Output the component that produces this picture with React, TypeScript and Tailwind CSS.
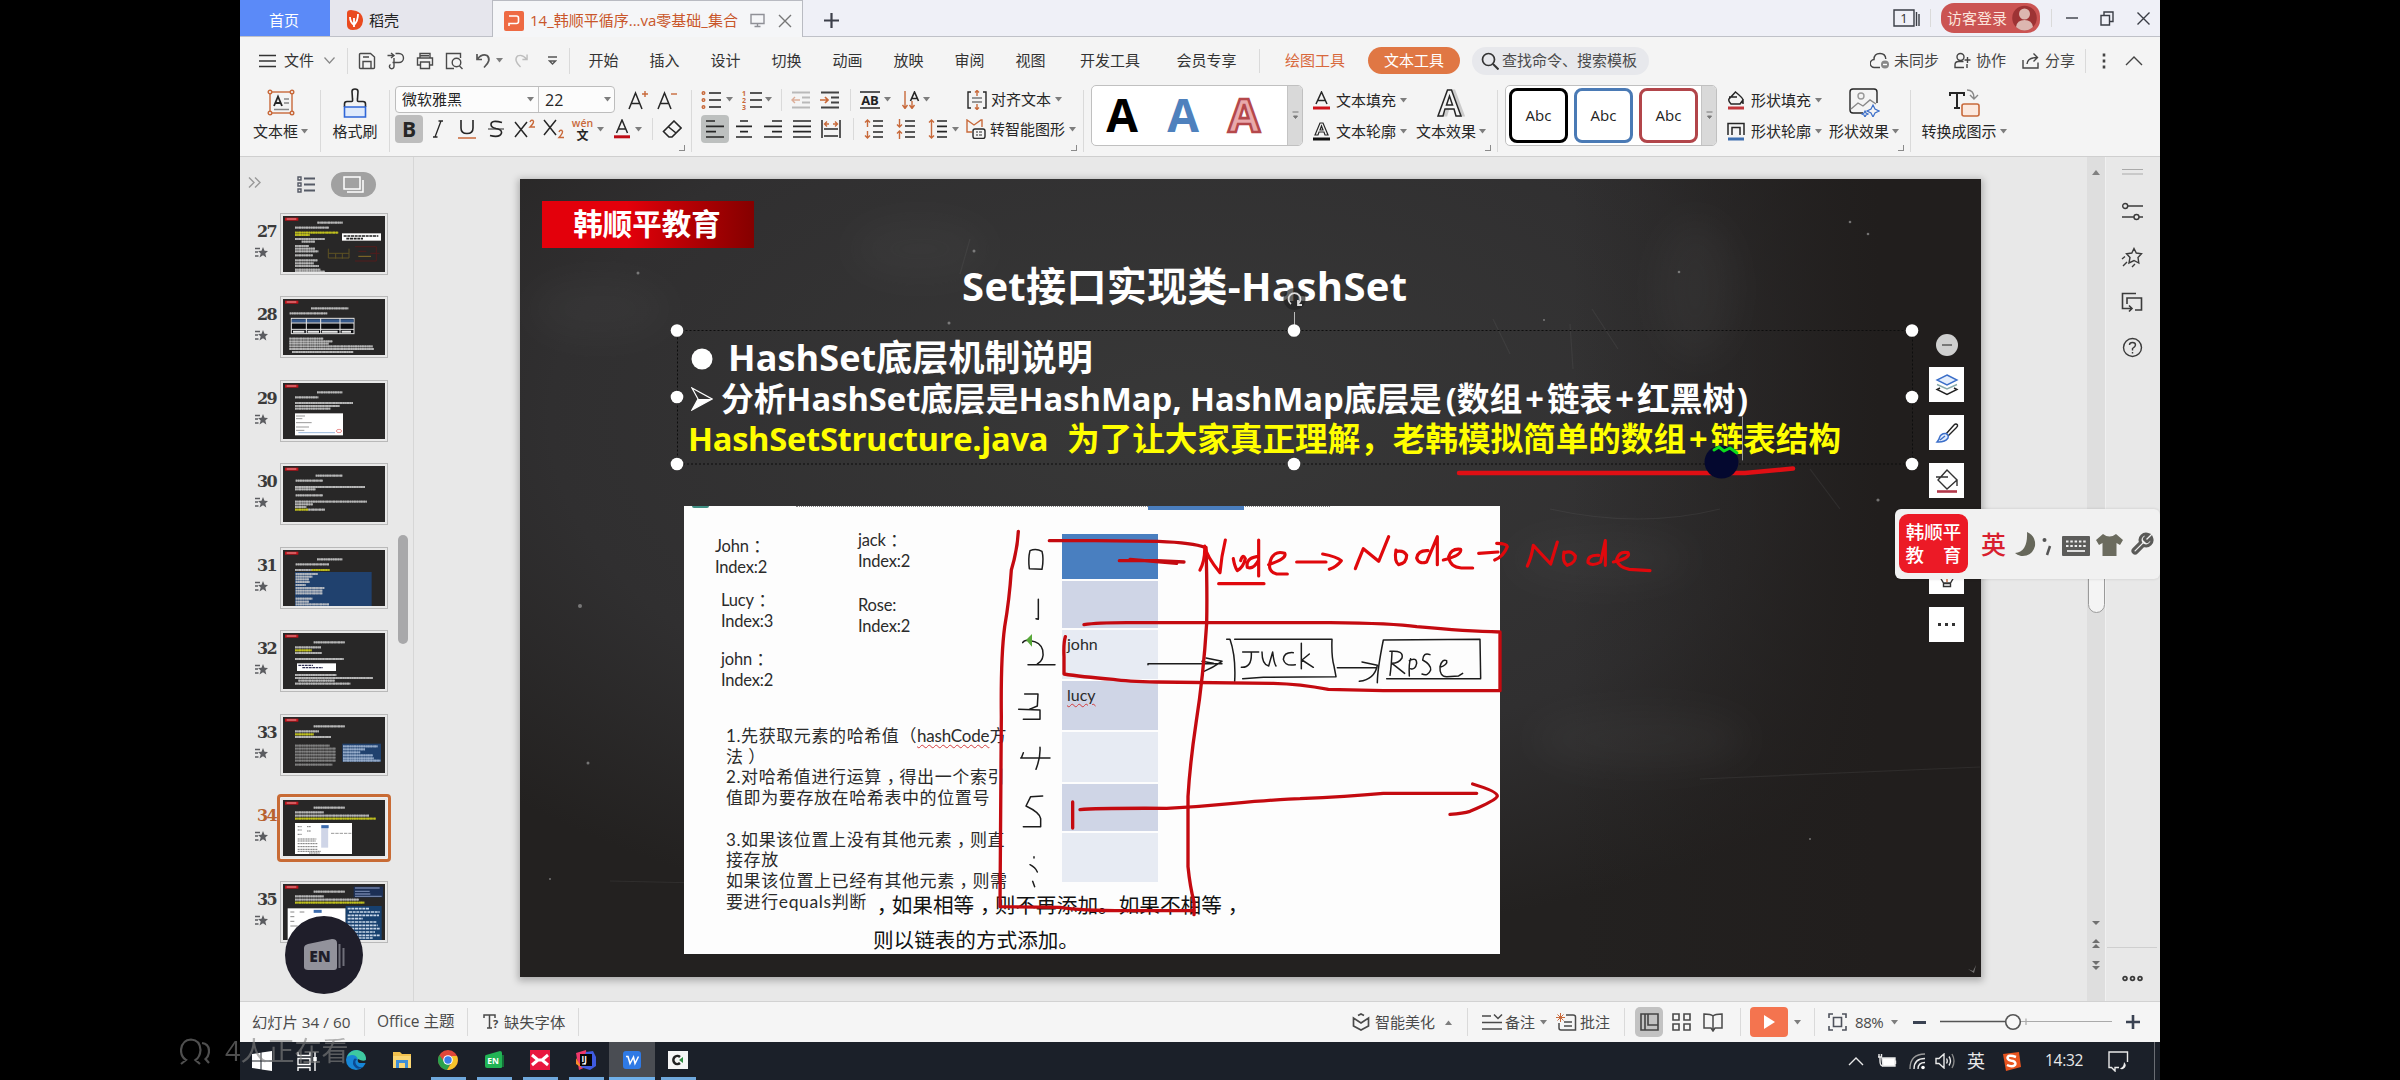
import React from 'react';

type SvgProps = { w?: number; h?: number; vb?: string; className?: string; children: React.ReactNode };

const Ic = ({ w = 18, h = 18, vb = '0 0 18 18', className = '', children }: SvgProps) => (
  <svg width={w} height={h} viewBox={vb} fill="none" stroke="currentColor" strokeWidth={1.4} className={'shrink-0 ' + className}>
    {children}
  </svg>
);

const Caret = ({ className = '' }: { className?: string }) => (
  <svg width="7" height="5" viewBox="0 0 7 5" className={'shrink-0 ' + className}>
    <path d="M0 0h7L3.5 4.5z" fill="#7d7d7d" />
  </svg>
);

const Sep = ({ className = '' }: { className?: string }) => <div className={'w-px shrink-0 bg-[#dadada] ' + className} />;

const OR = '#c8693a';

/* ---------- title bar ---------- */

const TitleBar = () => (
  <div className="flex h-[37px] items-stretch border-b border-[#bfc1c8] bg-[#eff0f7] text-[15px]">
    <div className="flex w-[90px] items-center justify-center bg-[#5b8af8] pr-[2px] pt-1 text-white">首页</div>
    <div className="flex w-[162px] items-center gap-[6px] bg-[#e6e6ed] pl-[16px] pt-1 text-[#222]">
      <svg width="17" height="20" viewBox="0 0 17 20">
        <path d="M1 3Q1 0 5 0Q17 1 17 11Q16 20 7 20Q1 20 1 15z" fill="#ea4a1f" />
        <path d="M8 17V8M8 15Q4 12 4 7M8 15Q12 11 12 4" stroke="#fff" strokeWidth="1.8" fill="none" />
      </svg>
      稻壳
    </div>
    <div className="-mb-px flex w-[311px] items-center border-x border-t border-[#b9bbc2] bg-[#f5f6f8] pl-[11px] pt-[3px] text-[#c9562a]">
      <svg width="20" height="20" viewBox="0 0 20 20" className="shrink-0">
        <rect width="20" height="20" rx="2" fill="#ee6a43" />
        <path d="M5 15V12.500H12.500A2 2 0 0 0 14.500 10.500V7A2 2 0 0 0 12.500 5H5" fill="none" stroke="#fff" strokeWidth="1.6" />
      </svg>
      <span className="ml-[6px] w-[209px] whitespace-nowrap">14_韩顺平循序...va零基础_集合</span>
      <Ic w={15} h={15} vb="0 0 15 15" className="ml-[11px] text-[#8f9096]"><path d="M1 1.500H14V10.500H1zM7.500 11V13M4.500 13.500H10.500" /></Ic>
      <Ic w={14} h={14} vb="0 0 14 14" className="ml-[13px] text-[#777]"><path d="M1 1L13 13M13 1L1 13" /></Ic>
    </div>
    <div className="ml-[21px] flex items-center pt-1 text-[#3c3f4a]">
      <Ic w={15} h={15} vb="0 0 15 15"><path d="M7.500 0V15M0 7.500H15" strokeWidth="2.200" /></Ic>
    </div>
    <div className="ml-auto mr-[10px] flex items-center text-[#3a3d45]">
      <Ic w={27} h={18} vb="0 0 27 18"><path d="M1 1H21V17H1zM23.500 3V17M26 5V17" /><text x="11" y="14" textAnchor="middle" fontSize="13" fill="#333" stroke="none">1</text></Ic>
      <Sep className="ml-[10px] h-[18px]" />
      <div className="ml-[10px] flex h-[30px] w-[99px] items-center rounded-[13px] bg-[#cb5453] pl-[6px] text-[#fbe4dc]">
        <span className="whitespace-nowrap">访客登录</span>
        <svg width="25" height="26" viewBox="0 0 25 26" className="ml-[5px] shrink-0">
          <circle cx="12.500" cy="13" r="12.300" fill="#9d3334" />
          <circle cx="12.500" cy="9" r="5.500" fill="#dcb6b0" />
          <path d="M4 22Q5 15 12.500 15Q20 15 21 22Q17 25.500 12.500 25.500Q8 25.500 4 22z" fill="#dcb6b0" />
        </svg>
      </div>
      <Sep className="ml-[11px] h-[18px]" />
      <Ic w={12} h={12} vb="0 0 12 12" className="ml-[14px]"><path d="M0 6H12" /></Ic>
      <Ic w={14} h={15} vb="0 0 14 15" className="ml-[22px]"><path d="M1 4.500H9.500V14H1zM4 4V1H13V10.500H10" /></Ic>
      <Ic w={13} h={13} vb="0 0 13 13" className="ml-[23px]"><path d="M0.500 0.500L12.500 12.500M12.500 0.500L0.500 12.500" /></Ic>
    </div>
  </div>
);

/* ---------- menu row ---------- */

const MenuRow = () => (
  <div className="flex h-[49px] items-center pb-[2px] text-[15px] text-[#333]">
    <Ic w={17} h={14} vb="0 0 17 14" className="ml-[19px]"><path d="M0 1.500H17M0 7H17M0 12.500H17" /></Ic>
    <span className="ml-[8px] w-[30px]">文件</span>
    <Ic w={11} h={7} vb="0 0 11 7" className="ml-[10px] text-[#888]"><path d="M0.500 0.500L5.500 6L10.500 0.500" strokeWidth="1.200" /></Ic>
    <Sep className="ml-[12px] h-[26px]" />
    <div className="ml-[10px] flex items-center gap-[11px] text-[#4a4a4a]">
      <Ic><path d="M2.500 1.500H12.500L16.500 5V15.500Q16.500 16.500 15.500 16.500H2.500Q1.500 16.500 1.500 15.500V2.500Q1.500 1.500 2.500 1.500zM5 16V9.500H13V16M5 5H11" /></Ic>
      <Ic><path d="M0.500 3.500H6M4 1L7 3.500L4 6M8.500 1.500H12A4.300 4.300 0 0 1 12 10.500H5.500M7 10.500V6M7 10.500V14.500A2.300 2.300 0 1 1 3.500 12.500" /></Ic>
      <Ic><path d="M4 6V1.500H14V6M4 13H1.500V6H16.500V13H14M4.500 10H13.500V16.500H4.500zM4.500 3.800H13" /></Ic>
      <Ic w={19} vb="0 0 19 18"><path d="M9 16.500H1.500V1.500H15.500V6M17.500 17L14.500 14" /><circle cx="11.500" cy="10.500" r="4.300" /></Ic>
    </div>
    <Ic w={15} h={17} vb="0 0 15 17" className="ml-[12px] text-[#555]"><path d="M1 2V7.500H6M1.500 7Q6 1.500 11 3.500Q16 8 8 15.500" strokeWidth="1.700" /></Ic>
    <Caret className="ml-[5px]" />
    <Ic w={14} h={17} vb="0 0 15 17" className="ml-[11px] text-[#bdbdbd]"><path d="M14 2V7.500H9M13.500 7Q9 1.500 4 3.500Q-1 8 7 15.500" strokeWidth="1.500" /></Ic>
    <Ic w={9} h={10} vb="0 0 9 10" className="ml-[20px] text-[#555]"><path d="M0 1H9M1.500 5L4.500 8L7.500 5z" /></Ic>
    <Sep className="ml-[12px] mr-[3px] h-[26px]" />
    {['开始', '插入', '设计', '切换', '动画', '放映', '审阅', '视图'].map((t) => (
      <span key={t} className="w-[61px] text-center">{t}</span>
    ))}
    <span className="w-[98px] text-center">开发工具</span>
    <span className="w-[95px] text-center">会员专享</span>
    <Sep className="ml-[5px] h-[24px]" />
    <span className="ml-[25px] w-[60px] text-[#d8683c]">绘图工具</span>
    <span className="ml-[23px] flex h-[27px] w-[92px] items-center justify-center rounded-full bg-[#e07744] text-white">文本工具</span>
    <div className="ml-[12px] flex h-[28px] w-[177px] items-center rounded-full bg-[#e7e8ec] pl-[9px]">
      <Ic className="text-[#333]"><circle cx="7.500" cy="7.500" r="6" strokeWidth="1.700" /><path d="M12 12L17.500 17.500" strokeWidth="2" /></Ic>
      <span className="ml-[3px] whitespace-nowrap text-[#4b4b4b]">查找命令、搜索模板</span>
    </div>
    <div className="ml-auto mr-[17px] flex items-center text-[#444]">
      <Ic w={20} h={17} vb="0 0 20 17"><path d="M10 15.500H4.500A4 4 0 0 1 4 7.500Q4 1.500 10 1.500Q15.500 1.500 15.800 7" /><circle cx="15" cy="12.500" r="4" fill="#888" stroke="none" /><path d="M13 12.500H17" stroke="#fff" /></Ic>
      <span className="ml-[4px] w-[45px]">未同步</span>
      <Ic w={19} className="ml-[14px]"><circle cx="7" cy="5" r="3.500" /><path d="M10 9.500H5Q1.500 9.500 1.500 13V15.500H10.500M14 5V11M11 8H17M13.500 12V16" /></Ic>
      <span className="ml-[4px] w-[30px]">协作</span>
      <Ic w={19} className="ml-[15px]"><path d="M1.500 8V16H16.500V10.500M5.500 12Q6 5.500 15.500 5.500M12 1.500L16 5.500L12 9.500" /></Ic>
      <span className="ml-[5px] w-[30px]">分享</span>
      <Sep className="ml-[10px] h-[24px]" />
      <Ic w={4} h={16} vb="0 0 4 16" className="ml-[16px]"><path d="M2 0.500V3.500M2 6.500V9.500M2 12.500V15.500" strokeWidth="2.600" /></Ic>
      <Ic w={18} h={10} vb="0 0 18 10" className="ml-[19px]"><path d="M1 9L9 1L17 9" /></Ic>
    </div>
  </div>
);

/* ---------- ribbon ---------- */

const Big = ({ icon, label, caret = true, className = '' }: { icon: React.ReactNode; label: string; caret?: boolean; className?: string }) => (
  <div className={'flex shrink-0 flex-col items-center ' + className}>
    <div className="flex h-[33px] items-center">{icon}</div>
    <div className="flex h-[24px] items-center gap-[3px] whitespace-nowrap">
      {label}
      {caret && <Caret />}
    </div>
  </div>
);

const Corner = () => (
  <div className="absolute bottom-[5px] right-[6px] h-[6px] w-[6px] border-b border-r border-[#8a8a8a]" />
);

const Slot = ({ children }: { children: React.ReactNode }) => <div className="flex w-[29px] shrink-0 items-center justify-center">{children}</div>;

const Tool = ({ icon, label, className = '' }: { icon: React.ReactNode; label: string; className?: string }) => (
  <div className={'flex items-center ' + className}>
    {icon}
    <span className="ml-[6px] whitespace-nowrap">{label}</span>
    <Caret className="ml-[4px]" />
  </div>
);

const GalleryButton = () => (
  <div className="ml-auto flex w-[15px] items-center justify-center rounded-r-[4px] border-l border-[#c4c4c4] bg-[#d9d9d9]">
    <Ic w={7} h={9} vb="0 0 7 9" className="text-[#777]"><path d="M0.500 1H6.500M1.500 5H5.500L3.500 7.500z" fill="#777" strokeWidth="1" /></Ic>
  </div>
);

const Lines = ({ d }: { d: string }) => <Ic w={18} h={18}><path d={d} strokeWidth="1.700" /></Ic>;

const Ribbon = () => (
  <div className="flex h-[71px] items-start border-b border-[#cfcfcf] text-[15px] text-[#262626]">
    <Big
      className="w-[80px] pl-px"
      label="文本框"
      icon={
        <Ic w={28} h={27} vb="0 0 28 27">
          <rect x="3" y="3" width="22" height="21" stroke={OR} />
          <g fill="#f4f4f4" stroke={OR}><circle cx="3" cy="3" r="1.800" /><circle cx="25" cy="3" r="1.800" /><circle cx="3" cy="24" r="1.800" /><circle cx="25" cy="24" r="1.800" /></g>
          <path d="M7 17L11 7.500L15 17M8.500 14H13.500" strokeWidth="1.800" /><path d="M17 10H22M17 14H22M7 20.500H22" stroke="#888" />
        </Ic>
      }
    />
    <Sep className="mt-[4px] h-[62px]" />
    <Big
      className="w-[68px]"
      label="格式刷"
      caret={false}
      icon={
        <Ic w={24} h={30} vb="0 0 24 30">
          <path d="M1.500 19V16Q1.500 13.500 4 13.500H8.500Q10 13.500 9.500 11L9 3.500Q9 1 12 1Q15 1 15 3.500L14.500 11Q14 13.500 15.500 13.500H20Q22.500 13.500 22.500 16V19" strokeWidth="1.600" />
          <path d="M1.500 19H22.500V29H1.500z" stroke="#2f66d8" strokeWidth="1.600" fill="#dfeafb" />
        </Ic>
      }
    />
    <Sep className="mt-[4px] h-[62px]" />

    <div className="relative flex h-full w-[301px] shrink-0 flex-col">
      <div className="flex h-[27px] items-center">
        <div className="ml-[5px] flex h-[27px] w-[220px] items-stretch rounded-[4px] border border-[#bdbdbd] bg-[#fcfcfc]">
          <div className="flex w-[143px] items-center justify-between border-r border-[#c4c4c4] pl-[6px] pr-[4px]">微软雅黑<Caret /></div>
          <div className="flex flex-1 items-center justify-between pl-[6px] pr-[3px] text-[16px]">22<Caret /></div>
        </div>
        <Ic w={20} h={20} vb="0 0 20 20" className="ml-[13px]"><path d="M1 19L7.500 3L14 19M3.500 13.500H11.500" strokeWidth="1.500" /><path d="M17 1V7M14 4H20" stroke={OR} /></Ic>
        <Ic w={20} h={20} vb="0 0 20 20" className="ml-[9px]"><path d="M1 19L7.500 3L14 19M3.500 13.500H11.500" strokeWidth="1.500" /><path d="M14 4H20" stroke={OR} /></Ic>
      </div>
      <div className="mt-[2px] flex h-[28px] items-center">
        <div className="ml-[5px] flex h-[28px] w-[28px] shrink-0 items-center justify-center rounded-[4px] bg-[#bdbdbd] text-[21px] font-bold leading-none">B</div>
        <Slot><Ic><path d="M12 1L6 17M9.500 1H14M4 17H8.500" strokeWidth="1.300" /></Ic></Slot>
        <Slot><Ic w={20} h={20} vb="0 0 20 20"><path d="M4 1V9Q4 14.500 10 14.500Q16 14.500 16 9V1" strokeWidth="1.600" /><path d="M1 19H19" stroke={OR} strokeWidth="1.500" /></Ic></Slot>
        <Slot><Ic><path d="M15 2.500Q4 -0.500 4 4.500Q4 7.500 9 8.500Q15 9.500 14.500 13Q13 18 3 15.500" strokeWidth="1.600" /><path d="M1 9H17" strokeWidth="1" /></Ic></Slot>
        <Slot><Ic w={22} h={20} vb="0 0 22 20"><path d="M1 3L13 18M13 3L1 18" strokeWidth="1.500" /><path d="M16 3Q17 0.500 19 1.500Q21 3 16 8H21" stroke={OR} /></Ic></Slot>
        <Slot><Ic w={22} h={20} vb="0 0 22 20"><path d="M1 1L13 16M13 1L1 16" strokeWidth="1.500" /><path d="M16 13Q17 10.500 19 11.500Q21 13 16 18.500H21" stroke={OR} /></Ic></Slot>
        <Slot>
          <div className="flex flex-col items-center leading-none"><span className="text-[10.500px] font-semibold leading-[12px] text-[#c8693a]">wén</span><span className="text-[12px] font-bold leading-[13px]">文</span></div>
        </Slot>
        <Caret />
        <Ic w={20} h={20} vb="0 0 20 20" className="ml-[8px]"><path d="M4.500 14L10 1L15.500 14M6.500 10H13.500" strokeWidth="1.500" /><path d="M2 17.800H18" stroke="#c00d17" strokeWidth="3" /></Ic>
        <Caret className="ml-[3px]" />
        <Sep className="ml-[10px] h-[22px]" />
        <Ic w={20} h={18} vb="0 0 20 18" className="ml-[9px]"><path d="M12 1L19 8L10 17H7L1.500 11.500zM6 6.500L14 13" strokeWidth="1.600" /></Ic>
      </div>
      <Corner />
    </div>
    <Sep className="mt-[4px] h-[62px]" />

    <div className="relative flex h-full w-[391px] shrink-0 flex-col">
      <div className="flex h-[27px] items-center">
        <Ic w={20} h={20} vb="0 0 20 20" className="ml-[9px]"><path d="M8 3H20M8 10H20M8 17H20" strokeWidth="1.800" stroke="#555" /><g stroke={OR}><circle cx="2.500" cy="3" r="1.300" /><circle cx="2.500" cy="10" r="1.300" /><circle cx="2.500" cy="17" r="1.300" /></g></Ic>
        <Caret className="ml-[5px]" />
        <Ic w={20} h={26} vb="0 0 20 26" className="ml-[9px]"><path d="M8 6H20M8 13H20M8 20H20" strokeWidth="1.800" stroke="#555" /><g fill={OR} stroke="none" fontSize="7" fontWeight="bold"><text x="0" y="8.500">1</text><text x="0" y="15.500">2</text><text x="0" y="22.500">3</text></g></Ic>
        <Caret className="ml-[3px]" />
        <Sep className="ml-[9px] h-[22px]" />
        <Ic w={20} className="ml-[9px] text-[#b9b9b9]" vb="0 0 20 18"><path d="M1 1.500H19M11 6.500H19M11 11.500H19M1 16.500H19" strokeWidth="1.800" /><path d="M9 9H1M4 6L1 9L4 12" stroke="#dcae99" /></Ic>
        <Ic w={20} className="ml-[9px] text-[#444]" vb="0 0 20 18"><path d="M1 1.500H19M11 6.500H19M11 11.500H19M1 16.500H19" strokeWidth="1.800" /><path d="M0 9H8M5 6L8 9L5 12" stroke={OR} strokeWidth="1.700" /></Ic>
        <Sep className="ml-[10px] h-[22px]" />
        <Ic w={20} className="ml-[9px]" vb="0 0 20 18"><path d="M0 1H20M0 17H20" strokeWidth="1.700" /><text x="10" y="13.800" textAnchor="middle" fontSize="13" fontWeight="bold" fill="#222" stroke="none">AB</text></Ic>
        <Caret className="ml-[4px]" />
        <Ic w={18} className="ml-[11px]" vb="0 0 18 18"><path d="M3 0V17M0.500 14L3 17.500L5.500 14M10 10V17M7.500 14L10 17.500L12.500 14" stroke={OR} /><path d="M8.500 10L12.500 1L16.500 10M10 7.500H15" strokeWidth="1.600" /></Ic>
        <Caret className="ml-[3px]" />
        <Ic w={20} h={20} vb="0 0 20 20" className="ml-[37px]"><path d="M4 2H1V18H4M16 2H19V18H16" /><path d="M5 8H15M5 12H15" stroke="#777" /><path d="M10 6V0.500M8 2.500L10 0.500L12 2.500M10 14V19.500M8 17.500L10 19.500L12 17.500" stroke={OR} /></Ic>
        <span className="ml-[4px] whitespace-nowrap">对齐文本</span>
        <Caret className="ml-[4px]" />
      </div>
      <div className="mt-[2px] flex h-[28px] items-center">
        <div className="ml-[9px] flex h-[28px] w-[28px] shrink-0 items-center justify-center rounded-[4px] bg-[#bdc0bf]"><Lines d="M0 1H9M0 6.300H18M0 11.600H10M0 17H18" /></div>
        <Slot><Lines d="M5 1H13M1 6.300H17M5 11.600H13M1 17H17" /></Slot>
        <Slot><Lines d="M8 1H18M0 6.300H18M8 11.600H18M0 17H18" /></Slot>
        <Slot><Lines d="M0 1H18M0 6.300H18M0 11.600H18M0 17H18" /></Slot>
        <Slot><Ic w={20} vb="0 0 20 18"><path d="M1 0V18M19 0V18M3 9H17M3 16H17" strokeWidth="1.500" /><path d="M8 4H3.500M6 1.500L3.500 4L6 6.500M12 4H16.500M14 1.500L16.500 4L14 6.500" stroke={OR} /></Ic></Slot>
        <Sep className="ml-[8px] h-[22px]" />
        <Ic w={20} h={20} vb="0 0 20 20" className="ml-[10px]"><path d="M9 2H19M9 7H19M9 13H19M9 18H19" strokeWidth="1.700" /><path d="M3.500 8V1M1 3.500L3.500 1L6 3.500M3.500 12V19M1 16.500L3.500 19L6 16.500" stroke={OR} /></Ic>
        <Ic w={20} h={20} vb="0 0 20 20" className="ml-[12px]"><path d="M9 2H19M9 7H19M9 13H19M9 18H19" strokeWidth="1.700" /><path d="M3.500 0V8M1 5.500L3.500 8L6 5.500M3.500 20V12M1 14.500L3.500 12L6 14.500" stroke={OR} /></Ic>
        <Ic w={20} h={20} vb="0 0 20 20" className="ml-[12px]"><path d="M9 2H19M9 7.300H19M9 12.600H19M9 18H19" strokeWidth="1.700" /><path d="M3.500 1V19M1 3.500L3.500 1L6 3.500M1 16.500L3.500 19L6 16.500" stroke={OR} /></Ic>
        <Caret className="ml-[4px]" />
        <Ic w={20} h={20} vb="0 0 20 20" className="ml-[7px]"><path d="M6 13H1V1L8 6L15 1H16V8" stroke={OR} /><rect x="7" y="10" width="12" height="9.500" rx="2" /><path d="M10 13H12M13 13H16M10 16H12M13 16H16" strokeWidth="1" /></Ic>
        <span className="ml-[4px] whitespace-nowrap">转智能图形</span>
        <Caret className="ml-[4px]" />
      </div>
      <Corner />
    </div>
    <Sep className="mt-[4px] h-[62px]" />

    <div className="relative flex h-full w-[413px] shrink-0">
      <div className="-mt-px ml-[7px] flex h-[61px] w-[212px] rounded-[5px] border border-[#c0c0c0] bg-white">
        {[
          ['black', 'black', 0],
          ['#4f81bd', '#4f81bd', 0],
          ['#e9a9ab', '#b5484b', 2.6],
        ].map(([fill, stroke, sw], i) => (
          <svg key={i} width="61" height="59" viewBox="0 0 61 59" className="shrink-0">
            <text x="30" y="46" textAnchor="middle" fontSize="46" fontWeight="bold" fill={fill as string} stroke={stroke as string} strokeWidth={sw as number}>A</text>
          </svg>
        ))}
        <GalleryButton />
      </div>
      <div className="ml-[10px] flex w-[93px] flex-col">
        <Tool className="h-[28px]" label="文本填充" icon={<Ic w={17} h={19} vb="0 0 17 19"><path d="M3 13L8.500 1L14 13M5 9.500H12" strokeWidth="1.500" /><path d="M0 17H17" stroke="#d0131b" strokeWidth="3" /></Ic>} />
        <Tool className="mt-[3px] h-[28px]" label="文本轮廓" icon={<Ic w={17} h={19} vb="0 0 17 19"><path d="M2 13L7 1H10L15 13H12L11 10H6L5 13zM7 8H10L8.500 4z" strokeWidth="1.200" /><path d="M0 17H17" stroke="#111" strokeWidth="3" /></Ic>} />
      </div>
      <Big className="ml-[10px] w-[70px]" label="文本效果" icon={<Ic w={30} h={30} vb="0 0 30 30"><path d="M5 27L14 3H18L27 27H22L20 20H12L10 27z" stroke="#ccc" strokeWidth="3" /><path d="M2 28L11.500 2H15.500L25 28H20L18 21H9L7 28zM10.500 17H16.500L13.500 8z" strokeWidth="1.500" fill="#f4f4f4" /></Ic>} />
      <Corner />
    </div>
    <Sep className="mt-[4px] h-[62px]" />

    <div className="relative flex h-full w-[412px] shrink-0">
      <div className="-mt-px ml-[7px] flex h-[61px] w-[212px] rounded-[5px] border border-[#c0c0c0] bg-white">
        <div className="flex items-center gap-[6px] pl-[3px] text-[#222]">
          <div className="flex h-[55px] w-[59px] items-center justify-center rounded-[8px] border-[3px] border-black text-[15px]">Abc</div>
          <div className="flex h-[55px] w-[59px] items-center justify-center rounded-[8px] border-[3px] border-[#4a7ab5] text-[15px]">Abc</div>
          <div className="flex h-[55px] w-[59px] items-center justify-center rounded-[8px] border-[3px] border-[#b2454a] text-[15px]">Abc</div>
        </div>
        <GalleryButton />
      </div>
      <div className="ml-[10px] flex w-[93px] flex-col">
        <Tool className="h-[28px]" label="形状填充" icon={<Ic w={18} h={19} vb="0 0 18 19"><path d="M8.500 1L2 8Q1 10 4 13H13L16 9Q16 7 8.500 1zM2 6H10M16 8V13" strokeWidth="1.500" /><path d="M1 17H17" stroke="#c2373c" strokeWidth="3" /></Ic>} />
        <Tool className="mt-[3px] h-[28px]" label="形状轮廓" icon={<Ic w={18} h={19} vb="0 0 18 19"><path d="M1 13V1.500H17V13M5 13V5.500H13V13" strokeWidth="1.500" /><path d="M1 17H17" stroke="#3e6fb0" strokeWidth="3" /></Ic>} />
      </div>
      <Big className="ml-[9px] w-[70px]" label="形状效果" icon={<Ic w={31} h={29} vb="0 0 31 29"><path d="M14 25H4Q1 25 1 22V4Q1 1 4 1H25Q28 1 28 4V15" /><circle cx="12" cy="8" r="3" stroke="#999" /><path d="M2 21L9 15L14 18L21 12L27 16" stroke="#888" /><path d="M24 17L26 21L30 23L26 25L24 29L22 25L18 23L22 21zM16 23L17 25L19 26L17 27L16 29L15 27L13 26L15 25z" stroke="#3c6fc9" strokeWidth="1.200" /></Ic>} />
      <Corner />
    </div>
    <Sep className="mt-[4px] h-[62px]" />
    <Big className="ml-[10px] w-[86px]" label="转换成图示" icon={<Ic w={31} h={28} vb="0 0 31 28"><path d="M1 7V4H15V7M8 4V19M5 19H11" strokeWidth="2" /><path d="M18 1Q25 1 25 9M21 6L25 10L29 6" stroke="#888" /><rect x="13" y="15" width="17" height="12" rx="2" stroke={OR} fill="#fbe9df" strokeWidth="1.600" /></Ic>} />
  </div>
);

/* ---------- slide navigator ---------- */

type Row = [number, number, number, string?];
const Y = '#dcdc1c';

const Thumb = ({ rows, under, over }: { rows: Row[]; under?: React.ReactNode; over?: React.ReactNode }) => (
  <svg width="102" height="56" viewBox="0 0 306 168" preserveAspectRatio="none" className="block bg-[#2a2828]">
    <rect width="306" height="168" fill="#282727" />
    {under}
    <rect x="6" y="5" width="40" height="9" fill="#c1121a" />
    <path d="M11 9H40" stroke="#e8a0a0" strokeWidth="3" />
    {rows.map(([x, y, w, c], i) => (
      <g key={i} stroke={c || '#cfcfcf'}>
        <path d={`M${x} ${y}h${w}`} strokeWidth="5.500" opacity="0.65" />
        <path d={`M${x} ${y}h${w}`} strokeWidth="6.500" strokeDasharray="5 2 3 1.500 7 2" opacity="0.6" />
      </g>
    ))}
    {over}
  </svg>
);

const thumbs: { n: number; body: React.ReactNode }[] = [
  { n: 27, body: <Thumb rows={[[103, 20, 76], [36, 35, 102], [36, 50, 130, Y], [36, 57, 44, Y], [36, 69, 90], [56, 77, 40], [36, 90, 42], [36, 98, 60], [36, 106, 70], [36, 118, 54], [36, 133, 68], [36, 142, 56], [36, 150, 72], [36, 161, 76], [36, 167, 90]]} over={<g fill="none" strokeWidth="3"><rect x="177" y="52" width="117" height="22" fill="#fff" /><path d="M182 60H286M190 68H240" stroke="#222" strokeWidth="5" strokeDasharray="9 2" /><path d="M136 98V126H198V98M136 112H198M158 112V128M178 112V128" stroke="#5e5224" /><path d="M216 92H280V135H216M226 106H250M262 112H290" stroke="#521c1c" /><path d="M226 121H264" stroke="#8a7228" /></g>} /> },
  { n: 28, body: <Thumb rows={[[84, 28, 112], [20, 43, 113], [19, 119, 102], [19, 127, 130], [19, 134, 118], [19, 142, 250], [19, 150, 254], [27, 159, 184]]} over={<g stroke="#e8e8e8" strokeWidth="3"><rect x="25" y="58" width="188" height="46" fill="#0c0d10" /><path d="M26 66H212" stroke="#35588a" strokeWidth="10" /><path d="M70 58V104M113 58V104M171 58V104M25 72H213M25 91H213" /><path d="M30 98H64M74 98H108M117 98H164M176 98H204" strokeWidth="6" /></g>} /> },
  { n: 29, body: <Thumb rows={[[102, 28, 76], [36, 43, 70], [36, 60, 174], [36, 69, 134], [36, 77, 106]]} over={<g><rect x="36" y="91" width="144" height="66" fill="#fff" /><path d="M39 99H66M39 107H58M39 119H86M39 132H78M39 142H64" stroke="#999" strokeWidth="3" /><path d="M46 149H156" stroke="#9ab8dc" strokeWidth="3" /><ellipse cx="168" cy="144" rx="8" ry="5" fill="none" stroke="#e06060" strokeWidth="2" /></g>} /> },
  { n: 30, body: <Thumb rows={[[98, 29, 80], [38, 44, 82], [36, 63, 210], [36, 70, 62], [38, 88, 82], [36, 107, 216], [36, 115, 54], [36, 123, 34], [36, 131, 40, Y], [76, 131, 50]]} /> },
  { n: 31, body: <Thumb rows={[[102, 28, 76], [38, 43, 100], [36, 60, 50], [86, 60, 54, Y], [38, 72, 66], [38, 80, 50], [38, 88, 40], [38, 96, 42], [38, 105, 30], [38, 114, 86], [38, 122, 80], [38, 130, 80], [38, 146, 50], [38, 155, 40], [38, 163, 100]]} under={<rect x="36" y="66" width="230" height="102" fill="#20416e" />} /> },
  { n: 32, body: <Thumb rows={[[92, 28, 94], [36, 43, 78], [36, 52, 50, Y], [36, 60, 80], [36, 78, 146], [36, 126, 124], [36, 135, 234], [46, 143, 110], [36, 152, 166]]} over={<g><rect x="42" y="91" width="117" height="23" fill="#fff" /><path d="M46 97H90M58 104H120" stroke="#335" strokeWidth="4" strokeDasharray="8 2" /></g>} /> },
  { n: 33, body: <Thumb rows={[[92, 28, 94], [36, 43, 72], [36, 52, 56, Y], [36, 60, 108], [36, 86, 104, '#909090'], [36, 95, 122, '#909090'], [36, 104, 122, '#909090'], [36, 113, 122, '#909090'], [36, 122, 122, '#909090'], [36, 131, 122, '#909090'], [36, 143, 112, '#909090'], [180, 88, 104, '#a9bdd8'], [180, 97, 66, '#a9bdd8'], [180, 106, 52, '#a9bdd8'], [180, 115, 90, '#a9bdd8'], [180, 124, 92, '#a9bdd8'], [180, 131, 112, '#a9bdd8']]} under={<rect x="178" y="80" width="116" height="54" fill="#20416e" />} /> },
  { n: 34, body: <Thumb rows={[[92, 23, 94], [36, 37, 86], [36, 47, 222], [36, 56, 242, Y]]} over={<g><rect x="36" y="69" width="171" height="93" fill="#fff" /><path d="M125 76V143" stroke="#cfd5e7" strokeWidth="21" /><path d="M115 80H137" stroke="#3d6cad" strokeWidth="9" /><path d="M44 80H56M72 80H84M44 90H56M72 93H84M44 103H56M44 117H100M44 123H98M44 131H104M44 140H104M44 148H104M44 154H114M78 159H110" stroke="#777" strokeWidth="3" strokeDasharray="4 1" /><path d="M144 100H205" stroke="#999" strokeWidth="3" strokeDasharray="10 3" /></g>} /> },
  { n: 35, body: <Thumb rows={[[92, 23, 94], [36, 37, 86], [36, 47, 192], [36, 56, 208, Y]]} over={<g><rect x="14" y="73" width="174" height="95" fill="#fff" /><path d="M92 82H116" stroke="#3d6cad" strokeWidth="9" /><path d="M22 84H34M50 84H64M22 98H34M22 112H34M22 126H44" stroke="#888" strokeWidth="3" /><rect x="212" y="8" width="88" height="32" fill="#1c2f55" /><path d="M216 12H290M216 22H260M216 30H262M216 37H296" stroke="#6d7fa5" strokeWidth="4" /><rect x="188" y="66" width="108" height="102" fill="#17406e" /><path d="M194 74H260M198 84H290M194 94H288M194 104H240M194 114H280M194 124H284M194 134H290M194 144H276M194 154H290M194 162H270" stroke="#c8d6e8" strokeWidth="5" strokeDasharray="9 2" /></g>} /> },
];

const Navigator = () => (
  <div className="flex w-[174px] shrink-0 flex-col overflow-hidden border-r border-[#d6d6d6]">
    <div className="mt-[14px] flex h-[26px] shrink-0 items-center">
      <Ic w={13} h={11} vb="0 0 13 11" className="mb-[4px] ml-[8px] text-[#999]"><path d="M1 0.500L6 5.500L1 10.500M7 0.500L12 5.500L7 10.500" /></Ic>
      <Ic w={18} h={17} vb="0 0 18 17" className="ml-[36px] text-[#555a66]"><path d="M7 2.500H18M7 8.500H18M7 14.500H18" strokeWidth="1.800" /><path d="M1 1H4V4H1zM1 7H4V10H1zM1 13H4V16H1z" /></Ic>
      <div className="ml-[16px] flex h-[25px] w-[45px] items-center justify-center rounded-full bg-[#a1a1a1] text-white">
        <Ic w={21} h={17} vb="0 0 21 17"><path d="M1 1H17V13H1zM4 16H20V4" strokeWidth="1.500" /></Ic>
      </div>
    </div>
    <div className="mt-[16px] flex">
      <div className="flex w-[149px] flex-col">
        {thumbs.map(({ n, body }) => (
          <div key={n} className="flex h-[83.45px] shrink-0 items-start">
            <div className="flex w-[40px] flex-col items-end pr-[4px] pt-[9px]">
              <span className={"text-[16px] font-bold leading-[20px] [font-family:'DejaVu_Serif',serif] [letter-spacing:-1.6px] " + (n === 34 ? 'text-[#b8622f]' : 'text-[#3b3b3b]')}>{n}</span>
              <Ic w={13} h={11} vb="0 0 13 11" className="mr-[8px] mt-[5px] text-[#5b5c60]"><path d="M0 1.500H5M0 5H3M0 9H3.500" strokeWidth="1.400" /><path d="M8 0L9.500 3.800L13 4L10.300 6.500L11.300 10.500L8 8.300L4.500 10.500L5.700 6.500L3 4L6.500 3.800z" fill="#5b5c60" stroke="none" /></Ic>
            </div>
            <div className={n === 34 ? 'h-[62px] w-[108px] rounded-[1px] border border-[#eee] p-[2px] outline-[3px] outline-[#c86b35] outline-solid' : 'h-[62px] w-[108px] border border-[#b9b9b9] p-[2px]'}>{body}</div>
          </div>
        ))}
      </div>
      <div className="ml-[9px] mt-[322px] h-[109px] w-[10px] shrink-0 rounded-full bg-[#a8a8aa]" />
    </div>
  </div>
);

/* ---------- slide ---------- */

const Board = () => (
  <svg viewBox="0 0 1461 798" className="absolute inset-0 h-full w-full">
    <defs>
      <radialGradient id="glow" cx="0.45" cy="0.3" r="0.66">
        <stop offset="0" stopColor="#383838" /><stop offset="0.65" stopColor="#302f30" /><stop offset="1" stopColor="#232120" />
      </radialGradient>
      <linearGradient id="side" x1="0" x2="1"><stop offset="0.72" stopColor="#211e1d" stopOpacity="0" /><stop offset="0.93" stopColor="#211e1d" /></linearGradient>
      <filter id="soft"><feGaussianBlur stdDeviation="18" /></filter>
    </defs>
    <rect width="1461" height="798" fill="url(#glow)" />
    <rect width="1461" height="798" fill="url(#side)" />
    <g filter="url(#soft)" fill="#555" opacity="0.16">
      <ellipse cx="1175" cy="110" rx="40" ry="70" /><ellipse cx="1080" cy="380" rx="90" ry="26" /><ellipse cx="1120" cy="560" rx="110" ry="30" />
      <ellipse cx="400" cy="70" rx="70" ry="30" /><ellipse cx="80" cy="130" rx="70" ry="30" />
    </g>
    <g stroke="#777" opacity="0.16" strokeWidth="1.200" fill="none">
      <path d="M440 95L450 60M1072 130L1098 170M90 702L180 704M1290 290L1320 330M1180 600L1460 588M1030 330Q1120 350 1200 330M973 140L990 175M1050 145L1053 190" />
    </g>
    <g fill="#aaa" opacity="0.6">
      <circle cx="454" cy="72" r="1.500" /><circle cx="429" cy="144" r="1.500" /><circle cx="1330" cy="43" r="1.300" /><circle cx="1348" cy="55" r="1.300" /><circle cx="1159" cy="93" r="1.300" /><circle cx="60" cy="427" r="2" /><circle cx="68" cy="584" r="1.500" /><circle cx="1358" cy="321" r="1.600" /><circle cx="118" cy="94" r="1.500" /><circle cx="1024" cy="141" r="1" /><circle cx="30" cy="700" r="1" /><circle cx="1290" cy="660" r="1" />
      <path d="M1448 790l6 4l2-8l-3 6z" />
    </g>
  </svg>
);

/* full-width punctuation centred in its cell */
const Punct = ({ children }: { children: string }) => (
  <>
    {children.split(/([，：）])/).map((s, i) =>
      /^[，：）]$/.test(s) ? <span key={i} className="-mr-[0.28em] pl-[0.28em]">{s}</span> : s,
    )}
  </>
);

const tableRows = ['bg-[#497fc0] h-[45px]', 'bg-[#cfd5e6] h-[47px]', 'bg-[#e7ebf3] h-[49px]', 'bg-[#cfd5e6] h-[49px]', 'bg-[#e7ebf3] h-[50px]', 'bg-[#cfd5e6] h-[47px]', 'bg-[#e7ebf3] h-[49px]'];
const tableText = ['', '', 'john', 'lucy', '', '', ''];

const Label = ({ a, b, className }: { a: string; b: string; className: string }) => (
  <div className={"absolute whitespace-pre text-[16.500px] leading-[21px] tracking-[-0.200px] [font-family:'Lato','Noto_Sans_CJK_SC',sans-serif] " + className}><Punct>{a}</Punct><br />{b}</div>
);

const Picture = () => (
  <div className="absolute left-[164px] top-[327px] h-[448px] w-[816px] bg-[#fdfdfd] text-[#2b2b2b]">
    <div className="absolute left-[112px] top-0 h-px w-[534px] border-t border-dotted border-[#888]" />
    <div className="absolute left-[464px] top-0 h-[4px] w-[96px] bg-[#4a7ebf]" />
    <div className="absolute left-[8px] top-0 h-[2px] w-[17px] rounded-b-full bg-[#3f8f83]" />
    <Label className="left-[31px] top-[30px]" a="John：" b="Index:2" />
    <Label className="left-[174px] top-[24px]" a="jack：" b="Index:2" />
    <Label className="left-[37px] top-[84px]" a="Lucy：" b="Index:3" />
    <Label className="left-[174px] top-[89px]" a="Rose:" b="Index:2" />
    <Label className="left-[37px] top-[143px]" a="john：" b="Index:2" />
    <div className="absolute left-[42px] top-[220px] whitespace-pre text-[17px] leading-[20.700px] tracking-[0.600px] [font-family:'Lato','Noto_Sans_CJK_SC',sans-serif]">
      <div>1.先获取元素的哈希值（<span className="tracking-[-0.200px] underline decoration-[#d23c3c] decoration-wavy decoration-1 underline-offset-2">hashCode</span>方</div>
      <div><Punct>法）</Punct></div>
      <div><Punct>2.对哈希值进行运算，得出一个索引</Punct></div>
      <div>值即为要存放在哈希表中的位置号</div>
      <div>&nbsp;</div>
      <div><Punct>3.如果该位置上没有其他元素，则直</Punct></div>
      <div>接存放</div>
      <div><Punct>如果该位置上已经有其他元素，则需</Punct></div>
      <div>要进行<span className="text-[17.500px]">equals</span>判断</div>
    </div>
    <div className="absolute left-[187px] top-[388px] whitespace-pre text-[20.650px] leading-[22px] text-[#111]"><Punct>，如果相等，则不再添加。如果不相等，</Punct></div>
    <div className="absolute left-[189px] top-[423px] whitespace-pre text-[20.600px] leading-[22px] text-[#111]">则以链表的方式添加。</div>
    <div className="absolute left-[378px] top-[28px] flex w-[96px] flex-col gap-[2px] text-[16px] leading-none [font-family:'Lato',sans-serif]">
      {tableRows.map((c, i) => (
        <div key={i} className={'shrink-0 pl-[5px] pt-[6px] ' + c}>
          <span className={i === 3 ? 'underline decoration-[#d23c3c] decoration-wavy decoration-1 underline-offset-2' : ''}>{tableText[i]}</span>
        </div>
      ))}
    </div>
  </div>
);

/* pen strokes drawn over the slide */
const Ink = () => (
  <svg viewBox="520 179 1461 798" className="absolute inset-0 h-full w-full" fill="none" strokeLinecap="round" strokeLinejoin="round">
    <g transform="translate(1000 490) scale(0.33333)">
      <g stroke="#1c1c1c" strokeWidth="4.500">
        <path d="M90 182Q84 205 88 236L126 238Q132 205 126 184Q108 174 90 182M115 328V388L108 386" />
        <path d="M68 458Q74 448 92 452Q122 456 128 480Q134 510 112 522M84 524H165" />
        <path d="M74 612L114 612L112 648L88 658M56 658L120 660L120 688H70" />
        <path d="M64 804L70 788M62 804H150M120 772Q122 800 108 838" />
        <path d="M128 918L92 920L78 948Q120 968 122 986V1010H70" />
        <path d="M102 1100V1104M90 1124Q106 1132 112 1146M98 1174L104 1190" />
        <path d="M444 524V521H666M618 504L666 514Q640 532 612 544M606 514L640 520" />
        <path d="M680 448H690Q708 500 704 574M704 448H996Q994 500 1002 528L1008 560L790 562L728 566" />
        <path d="M728 486H776M754 488Q756 534 724 532M786 486Q786 524 806 528L818 486Q822 520 828 528M880 488Q852 486 850 508Q856 530 886 524M904 460V536M928 492L906 510L940 532" />
        <path d="M1012 533H1130M1086 516L1132 526Q1124 568 1078 574M1132 578Q1132 540 1150 450L1440 448L1442 564M1160 566H1442" />
        <path d="M1176 486Q1174 530 1170 556M1170 484Q1212 480 1206 504Q1196 520 1176 520L1214 550M1232 506Q1226 520 1228 558M1228 512Q1250 500 1250 520Q1246 540 1232 536M1290 494Q1270 486 1268 510Q1294 524 1292 540Q1284 560 1266 552M1320 532Q1344 524 1340 512Q1326 506 1320 530Q1318 560 1340 560L1376 558L1388 550" />
      </g>
      <path d="M78 450L96 432V470z" fill="#58a83a" />
      <g stroke="#c40a10" strokeWidth="10">
        <path d="M55 124Q52 180 34 240Q28 330 14 410Q2 500 4 680Q2 900 0 1250L180 1252Q240 1262 380 1262H582" />
        <path d="M148 152H285L475 154Q580 158 614 172M618 172Q622 300 620 400Q610 560 588 700Q570 820 564 920V1130Q570 1190 582 1236V1274" />
        <path d="M358 212H470L552 216M390 208L530 220" />
        <path d="M252 404Q290 398 380 398H990Q1180 400 1250 410Q1400 424 1500 426V602H1150L985 598Q900 582 820 580L470 576Q380 574 340 568Q240 560 192 552V500Q190 460 196 440" />
        <path d="M218 936V1014M240 959Q290 954 500 955Q600 950 700 940Q860 926 900 926Q1040 920 1150 910H1430M1418 882Q1492 904 1492 918Q1490 930 1410 964Q1390 970 1350 973" />
      </g>
      <g stroke="#e0080c" strokeWidth="9.500">
        <path d="M600 240Q616 210 614 168Q620 200 660 248Q664 200 676 150M700 206Q704 230 712 242Q730 232 736 206Q728 190 722 212M770 200Q736 206 742 232Q760 240 776 210M776 150V258M806 224Q862 206 854 190Q824 180 812 210Q800 244 830 252H862M656 281H792" />
        <path d="M890 216H978M968 192Q1010 200 1024 212Q1010 230 988 238" />
        <path d="M1066 236Q1076 210 1090 176L1136 214L1166 140M1188 180Q1182 214 1196 224Q1220 220 1220 196Q1212 180 1190 184M1284 182Q1254 180 1250 204Q1256 224 1280 216L1312 140V224M1330 210Q1386 196 1382 178Q1354 174 1346 200Q1350 232 1384 234H1418" />
        <path d="M1436 190L1494 186M1490 160Q1520 160 1522 170Q1510 200 1484 210" />
        <path d="M1582 228Q1594 204 1600 166L1652 222L1672 156M1692 186Q1686 216 1702 226Q1728 218 1726 198Q1714 180 1694 188M1796 196Q1762 194 1764 218Q1778 230 1802 216L1816 152V226M1840 216Q1894 204 1884 188Q1858 182 1850 208Q1854 232 1888 238L1950 242" />
      </g>
    </g>
    <path d="M1459 473H1700L1745 473L1793 468.500" stroke="#e00f14" strokeWidth="4.500" />
    <ellipse cx="1721.500" cy="462" rx="17" ry="16.500" fill="#04082f" />
    <path d="M1714 450L1719 447L1724 451L1730 448L1737 453" stroke="#0bdc1c" strokeWidth="3" />
    <path d="M1742.500 417V460" stroke="#999" strokeWidth="1" />
  </svg>
);

const Selection = () => (
  <svg viewBox="520 179 1461 798" className="absolute inset-0 h-full w-full">
    <rect x="677.500" y="330.500" width="1235" height="133.500" fill="none" stroke="#0d0d0d" strokeDasharray="2 2" />
    <path d="M1294.500 312V326" stroke="#bbb" />
    <circle cx="1294.500" cy="299" r="11" fill="#222" opacity="0.700" />
    <path d="M1291 304A6 6 0 1 1 1298 304M1298 300V305H1302" fill="none" stroke="#ddd" strokeWidth="1.800" />
    <g fill="#fff">
      {[677, 1294, 1912].map((x) => [330.5, 397, 464].map((y) => (x === 1294 && y === 397 ? null : <circle key={x + '-' + y} cx={x} cy={y} r="6.300" />)))}
    </g>
  </svg>
);

const Plus = () => <span className="px-[3px]">+</span>;

const Slide = () => (
  <div className="relative ml-[106px] mt-[22px] h-[798px] w-[1461px] bg-[#2a2828] text-white shadow-[0_2px_7px_2px_rgba(0,0,0,0.25)]">
    <Board />
    <div className="absolute left-[22px] top-[22px] flex h-[47px] w-[212px] items-center justify-center bg-linear-to-r from-[#e3000b] from-40% to-[#850000] pr-[2px] text-[29.500px] font-bold leading-none">
      <span className="whitespace-nowrap pb-[2px]">韩顺平教育</span>
    </div>
    <div className="absolute left-[442px] top-[87px] whitespace-pre text-[40px] font-bold leading-[40px] tracking-[0.350px]">Set接口实现类-HashSet</div>
    <svg className="absolute left-[171px] top-[169px]" width="22" height="22" viewBox="0 0 22 22"><circle cx="11" cy="11" r="10.500" fill="#fff" /></svg>
    <div className="absolute left-[208px] top-[161px] whitespace-pre text-[36px] font-bold leading-[36px] tracking-[0.100px]">HashSet底层机制说明</div>
    <svg className="absolute left-[171px] top-[208px]" width="22" height="24" viewBox="0 0 22 24"><path d="M1 1L21 12L1 23L7 12z" fill="none" stroke="#fff" strokeWidth="1.200" /><path d="M1 23L7 12H21z" fill="#fff" /></svg>
    <div className="absolute left-[201px] top-[203px] whitespace-pre text-[32.700px] font-bold leading-[33px]">分析HashSet底层是HashMap, HashMap底层是<span className="pl-[4px]">(</span>数组<Plus />链表<Plus />红黑树<span className="pl-[2px]">)</span></div>
    <div className="absolute left-[168px] top-[243px] whitespace-pre text-[32.700px] font-bold leading-[33px] tracking-[-0.300px] text-[#ffff00]">HashSetStructure.java</div>
    <div className="absolute left-[547px] top-[243px] whitespace-pre text-[32.600px] font-bold leading-[33px] text-[#ffff00]">为了让大家真正理解，老韩模拟简单的数组<Plus />链表结构</div>
    <Selection />
    <Picture />
    <Ink />
  </div>
);

/* floating buttons beside the selected text box */
const FloatTools = () => (
  <div className="absolute left-[1515px] top-[177px] flex w-[35px] flex-col items-center gap-[13px] text-[#333]">
    <div className="mb-[-2px] flex h-[22px] w-[22px] items-center justify-center rounded-full bg-[#cfcfcf]"><div className="h-[2px] w-[10px] bg-[#777]" /></div>
    <div className="flex h-[35px] w-[35px] items-center justify-center bg-white"><Ic w={24} h={24} vb="0 0 24 24"><path d="M12 2L22 7L12 12L2 7z" stroke="#3c6fc9" fill="#e4eefc" /><path d="M2 11.500L12 16L22 11.500" stroke="#8aa" /><path d="M5 15L2 16.500L12 21.500L22 16.500L19 15" stroke="#222" /></Ic></div>
    <div className="flex h-[35px] w-[35px] items-center justify-center bg-white"><Ic w={24} h={24} vb="0 0 24 24"><path d="M11 13L19 4Q21 2 22.500 4Q23 5 21.500 6.500L13 15" stroke="#222" /><path d="M11 12.500Q14 14 13 17Q10 21.500 2 21Q4 19 4.500 16.500Q6 12 11 12.500zM5 19L10 15" stroke="#3c6fc9" fill="#dfeafb" /></Ic></div>
    <div className="flex h-[35px] w-[35px] items-center justify-center bg-white"><Ic w={24} h={26} vb="0 0 24 26"><path d="M12 2L22 12L12 21L3 12zM1 9H13M22 12V18" /><path d="M2 23.500H22" stroke="#b2384a" strokeWidth="2.600" /></Ic></div>
    <div className="h-[35px] w-[35px] bg-white" />
    <div className="flex h-[35px] w-[35px] items-end justify-center bg-white pb-[6px]"><Ic w={16} h={14} vb="0 0 16 14"><path d="M1 3L4.500 9H11.500L15 3M4.500 9.500H11.500V12.500H4.500z" /><path d="M8 2V8" stroke={OR} /></Ic></div>
    <div className="flex h-[35px] w-[35px] items-center justify-center gap-[4px] bg-white"><i className="h-[3px] w-[3px] bg-[#333]" /><i className="h-[3px] w-[3px] bg-[#333]" /><i className="h-[3px] w-[3px] bg-[#333]" /></div>
  </div>
);

const ImeBar = () => (
  <div className="absolute left-[1655px] top-[509px] flex h-[70px] w-[265px] items-center rounded-[6px] bg-[#f1f1f1] shadow-[0_0_3px_rgba(0,0,0,0.15)]">
    <div className="mb-[2px] ml-[4px] flex h-[59px] w-[69px] shrink-0 flex-col items-center justify-center rounded-[9px] bg-[#ec1a26] text-[18.500px] leading-[23px] text-white">
      <div className="whitespace-nowrap font-medium">韩顺平</div>
      <div className="flex w-[56px] justify-between font-medium"><span>教</span><span>育</span></div>
    </div>
    <span className="ml-[13px] text-[25px] font-medium leading-none text-[#d8202e]">英</span>
    <svg width="22" height="25" viewBox="0 0 22 25" className="ml-[9px] shrink-0"><path d="M12 0Q21 4 20 14Q17 25 6 24Q2 23 0 21Q13 20 12 0z" fill="#66675a" /></svg>
    <svg width="10" height="18" viewBox="0 0 10 18" className="ml-[5px] mt-[6px] shrink-0"><circle cx="2.500" cy="2" r="2" fill="#555" /><path d="M8 8L5 17" stroke="#555" strokeWidth="2.500" /></svg>
    <svg width="28" height="20" viewBox="0 0 28 20" className="ml-[10px] mt-[4px] shrink-0"><rect width="28" height="20" rx="1" fill="#5c5c5a" /><path d="M4 5.500H24M4 10H24" stroke="#eee" strokeWidth="2.200" strokeDasharray="2.500 1.800" /><path d="M5 15H23" stroke="#eee" strokeWidth="1.800" /></svg>
    <svg width="27" height="22" viewBox="0 0 27 22" className="ml-[6px] mt-[2px] shrink-0"><path d="M7 0Q13.500 5 20 0L27 6L24 11L20.500 9V22H6.500V9L3 11L0 6z" fill="#6b6b5e" /></svg>
    <svg width="24" height="24" viewBox="0 0 24 24" className="ml-[7px] shrink-0"><path d="M14.700 6.300a1 1 0 0 0 0 1.400l1.600 1.600a1 1 0 0 0 1.400 0l3.800-3.800a6 6 0 0 1-7.900 7.900l-7 7a2.100 2.100 0 0 1-3-3l7-7a6 6 0 0 1 7.900-7.900z" fill="none" stroke="#5a5a58" strokeWidth="3" /></svg>
  </div>
);

const Workspace = () => (
  <div className="flex h-[844px] bg-[#e8e8e8]">
    <Navigator />
    <div className="relative w-[1673px] shrink-0">
      <div className="flex"><Slide /></div>
      <FloatTools />
    </div>
    <div className="flex w-[18px] shrink-0 flex-col items-center bg-[#dedede] pt-[13px]">
      <svg width="8" height="5" viewBox="0 0 8 5" className="shrink-0"><path d="M0 5L4 0L8 5z" fill="#808080" /></svg>
      <div className="mt-[358px] h-[80px] w-[17px] shrink-0 rounded-full border border-[#9a9a9a] bg-[#f4f4f4]" />
      <svg width="8" height="52" viewBox="0 0 8 52" className="mt-[307px] shrink-0" fill="#707070"><path d="M0 1H8L4 5zM0 23L4 19L8 23zM0 28L4 24L8 28zM0 41H8L4 45zM0 46H8L4 50z" /></svg>
    </div>
    <div className="flex flex-1 flex-col items-center border-l border-[#f0f0f0] pr-[2px] pt-[11px] text-[#3b3b3b]">
      <Ic w={21} h={7} vb="0 0 21 7" className="text-[#aaa]"><path d="M0 1.500H21M0 6H21" strokeWidth="1" /></Ic>
      <Ic w={21} h={20} vb="0 0 21 20" className="mt-[27px]"><path d="M6 4H21M0 15H12M17 15H21" /><circle cx="3.200" cy="4" r="2.500" /><circle cx="14.500" cy="15" r="2.500" /></Ic>
      <Ic w={22} h={22} vb="0 0 22 22" className="mt-[25px]"><path d="M13 1.500L15.300 6L20.500 6.700L17 10.500L17.800 16L13 13.500L8 16L9 10.500L5.500 6.700L10.800 6zM1 12L4 9.500M2 19L6 15M11 20L14 17" /></Ic>
      <Ic w={22} h={21} vb="0 0 22 21" className="mt-[23px]"><path d="M15 1.500H1.500V16.500H11M8 13.500L11 16.500L8 19.500M14 18H20.500V6H6V12" strokeWidth="1.600" /></Ic>
      <Ic w={21} h={21} vb="0 0 21 21" className="mt-[24px]"><circle cx="10.500" cy="10.500" r="9" /><path d="M7.500 8Q7.500 5.500 10.500 5.500Q13.500 5.500 13.500 8Q13.500 9.500 10.500 11.500V13.500M10.500 15V16.500" /></Ic>
      <div className="mt-[589px] h-px w-[50px] bg-[#cfcfcf]" />
      <Ic w={21} h={7} vb="0 0 21 7" className="mt-[27px]"><circle cx="3" cy="3.500" r="1.900" strokeWidth="1.800" /><circle cx="10.500" cy="3.500" r="1.900" strokeWidth="1.800" /><circle cx="18" cy="3.500" r="1.900" strokeWidth="1.800" /></Ic>
    </div>
  </div>
);

/* ---------- status bar and taskbar ---------- */

const StatusBar = () => (
  <div className="flex h-[41px] items-center border-t border-[#d2d2d2] bg-[#f5f5f5] text-[15px] text-[#4a4a4a]">
    <span className="ml-[12px] w-[101px] whitespace-nowrap text-[15.300px]">幻灯片 34 / 60</span>
    <Sep className="ml-[11px] h-[28px]" />
    <span className="ml-[12px] w-[79px] whitespace-nowrap text-[15.500px]">Office 主题</span>
    <Sep className="ml-[11px] h-[28px]" />
    <Ic w={17} h={16} vb="0 0 17 16" className="ml-[15px]"><path d="M1 4V1H12V4M6.500 1V14M4 14H9" strokeWidth="1.500" /><text x="10" y="14" fontSize="11" fontWeight="bold" fill="#444" stroke="none">?</text></Ic>
    <span className="ml-[4px] w-[62px] whitespace-nowrap text-[15.300px]">缺失字体</span>
    <Sep className="ml-[12px] h-[28px]" />
    <div className="ml-auto mr-[20px] flex items-center">
      <Ic w={18} h={18}><path d="M6 2.500L9 1L12 2.500M1.500 5V13L9 17L16.500 13V5L9 10z" strokeWidth="1.700" /></Ic>
      <span className="ml-[5px] w-[60px] whitespace-nowrap">智能美化</span>
      <Caret className="ml-[10px] rotate-180" />
      <Sep className="ml-[15px] h-[28px]" />
      <Ic w={21} h={18} vb="0 0 21 18" className="ml-[14px]"><path d="M0 3H9M0 9.500H20M0 16H20M12 1.500L16 5.500L20 1.500" strokeWidth="1.500" /></Ic>
      <span className="ml-[2px] w-[30px]">备注</span>
      <Caret className="ml-[5px]" />
      <Ic w={21} h={19} vb="0 0 21 19" className="ml-[9px]"><path d="M10 2H17Q19.500 2 19.500 4V17H5Q3 17 3 15V10M8 9H16M8 13H16" strokeWidth="1.500" /><path d="M4.500 0V9M0 4.500H9M1.500 1.500L7.500 7.500M7.500 1.500L1.500 7.500" stroke={OR} strokeWidth="1" /></Ic>
      <span className="ml-[3px] w-[30px]">批注</span>
      <Sep className="ml-[14px] h-[28px]" />
      <div className="ml-[10px] flex h-[30px] w-[28px] items-center justify-center rounded-[5px] bg-[#c2c2c2]"><Ic w={19} h={18} vb="0 0 19 18" className="text-[#444]"><path d="M1 1H18V17H1zM5 1V17M8 1V12H18" strokeWidth="1.600" /></Ic></div>
      <Ic w={19} h={18} vb="0 0 19 18" className="ml-[9px]"><path d="M1 1H7V7H1zM12 1H18V7H12zM1 11H7V17H1zM12 11H18V17H12z" strokeWidth="1.600" /></Ic>
      <Ic w={20} h={19} vb="0 0 20 19" className="ml-[12px]"><path d="M10 3Q8 1 1 1V15H8L10 18L12 15H19V1Q12 1 10 3zM10 3V17" strokeWidth="1.500" /></Ic>
      <Sep className="ml-[17px] h-[28px]" />
      <div className="ml-[9px] flex h-[30px] w-[38px] items-center justify-center rounded-[4px] bg-[#f4744f]"><svg width="11" height="14" viewBox="0 0 11 14"><path d="M0 0L11 7L0 14z" fill="#fff" /></svg></div>
      <Caret className="ml-[6px]" />
      <Sep className="ml-[13px] h-[28px]" />
      <Ic w={19} h={18} vb="0 0 19 18" className="ml-[13px] text-[#4e525c]"><path d="M1 5V1H5M14 1H18V5M18 13V17H14M5 17H1V13M5.500 4.500H13.500V13.500H5.500z" strokeWidth="1.600" /></Ic>
      <span className="ml-[8px] w-[31px] whitespace-nowrap text-[15px] tracking-[-0.400px]">88%</span>
      <Caret className="ml-[5px]" />
      <div className="ml-[15px] h-[3px] w-[13px] bg-[#3a4252]" />
      <Ic w={172} h={20} vb="0 0 172 20" className="ml-[14px]"><path d="M0 9.500H73" stroke="#555" /><path d="M73 9.500H172M86 6.500V13" stroke="#aaa" strokeWidth="1.200" /><circle cx="73" cy="10" r="7.300" fill="#f7f7f7" stroke="#555" strokeWidth="1.600" /></Ic>
      <Ic w={14} h={14} vb="0 0 14 14" className="ml-[14px] text-[#3a4252]"><path d="M7 0V14M0 7H14" strokeWidth="2.600" /></Ic>
    </div>
  </div>
);

const AppSlot = ({ state, children }: { state?: 'open' | 'active'; children: React.ReactNode }) => (
  <div className={'flex h-full w-[46px] shrink-0 flex-col items-center ' + (state === 'active' ? 'bg-[#4a4d53]' : '')}>
    <div className="flex flex-1 items-center">{children}</div>
    <div className={state === 'active' ? 'h-[3px] w-full bg-[#6fb0ea]' : state === 'open' ? 'h-[3px] w-[35px] bg-[#6fa8dc]' : 'h-[3px]'} />
  </div>
);

const Taskbar = () => (
  <div className="flex h-[38px] items-stretch bg-[#1b2029] text-white">
    <div className="flex w-[44px] items-center justify-center"><svg width="20" height="20" viewBox="0 0 20 20" fill="#fff"><path d="M0 3L8.500 1.800V9.500H0zM9.500 1.600L20 0V9.500H9.500zM0 10.500H8.500V18.200L0 17zM9.500 10.500H20V20L9.500 18.400z" /></svg></div>
    <div className="mr-[4px] flex w-[45px] items-center justify-center"><Ic w={20} h={19} vb="0 0 20 19"><path d="M1 0V3.500H13V0M1 6.500H13V12.500H1zM1 19V15.500H13V19M18 0V19" /><path d="M18 5V9" strokeWidth="3.500" /></Ic></div>
    <AppSlot>
      <svg width="20" height="20" viewBox="0 0 20 20">
        <circle cx="10" cy="10" r="10" fill="#1786d6" /><path d="M1 7Q4 0 11 0Q19 1 20 8Q20 13 15 13Q11 13 12 10Q11 5 6 5Q3 5 1 7z" fill="#3ec9a0" /><path d="M8 9Q5 14 10 18Q13 20 17 17Q11 18 9.500 13Q9 10 11 9.500Q9 8 8 9z" fill="#0c4a92" /><path d="M12 9Q11 12 13.500 13H20V10Q17 12 12 9z" fill="#1b2029" />
      </svg>
    </AppSlot>
    <AppSlot><svg width="20" height="18" viewBox="0 0 20 18"><path d="M1 1H8L10 3H19V17H1z" fill="#f2c14e" /><path d="M1 5H19V17H1z" fill="#fbd774" /><path d="M4 17V9H16V17H13V12H7V17z" fill="#3f8fd8" /></svg></AppSlot>
    <AppSlot state="open">
      <svg width="20" height="20" viewBox="0 0 20 20"><circle cx="10" cy="10" r="10" fill="#e0473a" /><path d="M1.300 5A10 10 0 0 0 9 20L13.500 12L10 10L6 11.500z" fill="#2ba24c" /><path d="M19 6A10 10 0 0 1 9 20L13.800 12.500L14 6z" fill="#f7c52b" /><circle cx="10" cy="10" r="4.800" fill="#fff" /><circle cx="10" cy="10" r="3.700" fill="#3b7de8" /></svg>
    </AppSlot>
    <AppSlot state="open"><svg width="20" height="20" viewBox="0 0 20 20"><path d="M2 5L16 1Q18 1 18 3V17Q18 18 17 18H3Q1 18 1 16V7Q1 5 2 5z" fill="#22b455" /><path d="M19 5V17" stroke="#138a3c" strokeWidth="1.500" /><text x="9" y="13.500" textAnchor="middle" fontSize="8.500" fontWeight="bold" fill="#fff">EN</text></svg></AppSlot>
    <AppSlot state="open"><svg width="20" height="20" viewBox="0 0 20 20"><rect width="20" height="20" fill="#e8173f" /><path d="M2 5L8 10L2 15M18 5L12 10L18 15M6 10H14" stroke="#fff" strokeWidth="3" fill="none" /></svg></AppSlot>
    <AppSlot state="open"><svg width="20" height="20" viewBox="0 0 20 20"><path d="M0 3L10 0L12 16L3 20z" fill="#f0386b" /><path d="M10 2L17 1L20 7V16L14 20L4 17z" fill="#3f5be0" /><path d="M0 8L6 18L0 14z" fill="#f78c2b" /><rect x="4" y="4" width="12" height="12" fill="#050505" /><text x="5.500" y="12" fontSize="8" fontWeight="bold" fill="#fff">IJ</text><path d="M6 14H10" stroke="#fff" /></svg></AppSlot>
    <AppSlot state="active"><svg width="18" height="18" viewBox="0 0 18 18"><rect width="18" height="18" rx="3" fill="#2f7ae5" /><path d="M3 5.500H5L7 12.500L10.500 6L12 12.500L15.500 5.500" stroke="#fff" strokeWidth="1.500" fill="none" /></svg></AppSlot>
    <AppSlot state="open"><svg width="20" height="18" viewBox="0 0 20 18"><rect width="20" height="18" fill="#f5f5f5" /><path d="M12 6A4 4 0 1 0 12 12" stroke="#222" strokeWidth="2.500" fill="none" /><path d="M11 9L15 6V12z" fill="#2b8a3e" /></svg></AppSlot>
    <div className="ml-auto mr-[5px] flex items-center text-[#e9e9e9]">
      <Ic w={16} h={9} vb="0 0 16 9"><path d="M1 8L8 1L15 8" /></Ic>
      <Ic w={20} h={14} vb="0 0 20 14" className="ml-[13px]"><path d="M5 4H18V12H6z" fill="#fff" /><path d="M18.500 6.500V10M1 3H5M2 0V3M4.500 0V3M3 3V7Q3 12 6 12" /></Ic>
      <Ic w={17} h={17} vb="0 0 17 17" className="ml-[12px]"><path d="M1 16Q1 1 16 1" stroke="#999" /><path d="M5 16Q5 5.500 16 5.500M9 16Q9 9.500 16 9.500" /><circle cx="14" cy="14.500" r="1.800" fill="#fff" stroke="none" /></Ic>
      <Ic w={20} h={16} vb="0 0 20 16" className="ml-[9px]"><path d="M1 5.500H4L9 1V15L4 10.500H1zM11.500 5.500Q13 8 11.500 10.500M14 3.500Q17 8 14 12.500" /><path d="M17 1Q21 8 17 15" stroke="#888" /></Ic>
      <span className="ml-[12px] text-[18px] leading-none">英</span>
      <svg width="20" height="20" viewBox="0 0 20 20" className="ml-[16px]"><path d="M2 3L18 1L20 16L5 20z" fill="#e8541f" /><path d="M15 6Q7 3 6.500 7Q7 9.500 12 10Q15.500 11.500 14 14Q11 16.500 6 14" stroke="#fff" strokeWidth="2.500" fill="none" /></svg>
      <span className="ml-[24px] w-[39px] text-[15.500px] tracking-[-0.300px]">14:32</span>
      <Ic w={21} h={21} vb="0 0 21 21" className="ml-[24px]"><path d="M11 16.500H7V20L3.500 16.500H1V1H19.500V11" /><path d="M16 11Q20 15 15 18Q13 18.500 12 17.500Q16 16 16 11z" fill="#eee" stroke="none" /></Ic>
      <div className="ml-[25px] h-[38px] w-px bg-[#6a6d73]" />
    </div>
  </div>
);

export default function App() {
  return (
    <div className="relative flex h-[1080px] w-[2400px] justify-center overflow-hidden bg-black [font-family:'Open_Sans','Noto_Sans_CJK_SC',sans-serif]">
      <div className="relative flex h-full w-[1920px] flex-col bg-[#f4f4f4]">
        <TitleBar />
        <MenuRow />
        <Ribbon />
        <Workspace />
        <StatusBar />
        <Taskbar />
        <ImeBar />
      </div>
      <div className="absolute left-[285px] top-[916px] flex h-[78px] w-[78px] items-center justify-center rounded-full bg-[#1f1e2a]">
        <svg width="41" height="32" viewBox="0 0 41 32">
          <path d="M4 5L28 0Q33 0 33 4V28Q33 31 30 31H4Q0 31 0 28V9Q0 6 4 5z" fill="#92929b" />
          <path d="M35.500 5V29M39.500 9V27" stroke="#6f6f79" strokeWidth="2" />
          <text x="16" y="23" textAnchor="middle" fontSize="15.500" fontWeight="800" fill="#1f1e2a">EN</text>
        </svg>
      </div>
      <div className="absolute left-[180px] top-[1034px] flex items-center text-[#848484] opacity-60">
        <Ic w={30} h={27} vb="0 0 30 27"><path d="M1 26L6 22Q1 19 1 12Q2 2 11 1.500Q20 2 20.500 12Q20 19 15.500 22L20 26M22 5Q29 6 29 13Q29 18 25.500 21L29 25" strokeWidth="2.200" /></Ic>
        <span className="ml-[15px] whitespace-nowrap text-[27px] leading-[34px]">4人正在看</span>
      </div>
    </div>
  );
}
